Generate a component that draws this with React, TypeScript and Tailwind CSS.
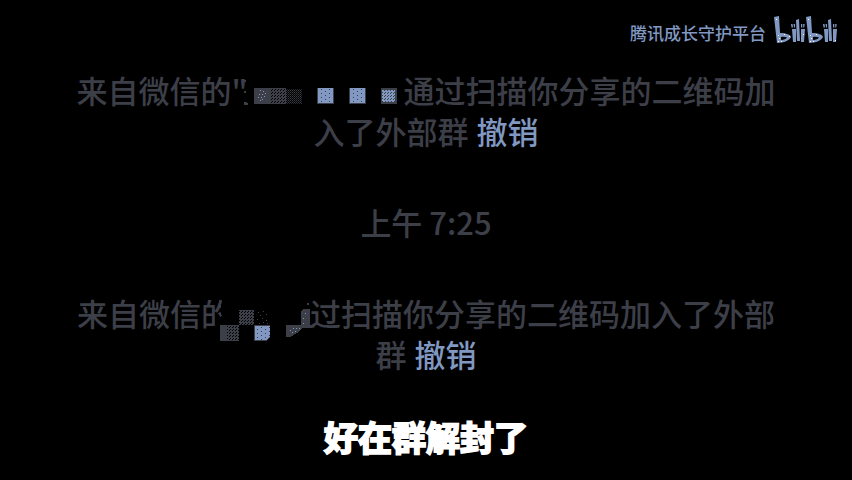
import type { ReactNode } from "react";

function DitherPatterns() {
  return (
    <defs>
      <pattern id="blueDots" width="8" height="4" patternUnits="userSpaceOnUse">
        <rect width="8" height="4" fill="#8199c2" />
        <rect x="1" y="1" width="1" height="1" fill="#3d3f48" />
        <rect x="5" y="3" width="1" height="1" fill="#3d3f48" />
      </pattern>
      <pattern id="blueDense" width="3" height="3" patternUnits="userSpaceOnUse">
        <rect width="3" height="3" fill="#8199c2" />
        <rect x="0" y="0" width="1" height="1" fill="#3d3f48" />
        <rect x="1" y="2" width="1" height="1" fill="#3d3f48" />
      </pattern>
      <pattern id="greyDense" width="3" height="3" patternUnits="userSpaceOnUse">
        <rect width="3" height="3" fill="#3d3f48" />
        <rect x="1" y="0" width="1" height="1" fill="#000" />
        <rect x="2" y="2" width="1" height="1" fill="#000" />
      </pattern>
      <pattern id="greySparse" width="2" height="2" patternUnits="userSpaceOnUse">
        <rect x="0" y="0" width="1" height="1" fill="#3d3f48" />
        <rect x="1" y="1" width="1" height="1" fill="#25262c" />
      </pattern>
    </defs>
  );
}

function FirstMosaic() {
  return (
    <svg className="h-10 w-[156px] shrink-0 overflow-visible" viewBox="248 70 156 40" shapeRendering="crispEdges" aria-hidden="true">
      <DitherPatterns />
      <path d="M244 80h2v2h-2zM244 91h2v2h-2zM244 102h3v1h1v2h-4z" fill="#3d3f48" />
      <rect x="254" y="88" width="17" height="16" fill="#3d3f48" />
      <rect x="271" y="88" width="15" height="16" fill="url(#greyDense)" />
      <rect x="286" y="89" width="16" height="15" fill="url(#greySparse)" />
      <path d="M260 90h1v1h-1zM263 91h1v1h-1zM259 94h1v1h-1zM262 94h1v1h-1zM265 93h1v1h-1zM258 97h1v1h-1zM261 97h1v1h-1zM264 96h1v1h-1zM260 100h1v1h-1zM262 99h1v1h-1z" fill="#8199c2" />
      <rect x="317" y="88" width="17" height="16" fill="#3d3f48" />
      <rect x="318" y="88" width="15" height="15" fill="url(#blueDots)" />
      <rect x="349" y="88" width="17" height="16" fill="#3d3f48" />
      <rect x="350" y="88" width="15" height="15" fill="url(#blueDots)" />
      <rect x="381" y="88" width="16" height="16" fill="#3d3f48" />
      <rect x="382" y="90" width="13" height="12" fill="url(#blueDense)" />
    </svg>
  );
}

function SecondMosaic() {
  return (
    <svg className="-ml-7 h-12 w-[106px] shrink-0 overflow-visible" viewBox="204 289 106 48" shapeRendering="crispEdges" aria-hidden="true">
      <path d="M223 298L220 310L222 316L216 318V344H309V298Z" fill="#000" />
      <rect x="220" y="325" width="19" height="16" fill="#3d3f48" />
      <rect x="227" y="326" width="12" height="14" fill="url(#greyDense)" />
      <rect x="239" y="310" width="15" height="15" fill="url(#greyDense)" />
      <path d="M258 312h1v1h-1zM263 311h1v1h-1zM260 315h1v1h-1zM266 314h1v1h-1zM257 319h1v1h-1zM262 318h1v1h-1zM266 320h1v1h-1zM259 323h1v1h-1zM263 322h1v1h-1zM267 323h1v1h-1z" fill="#3d3f48" />
      <path d="M254 325H270V338L266 341H254Z" fill="#3d3f48" />
      <path d="M255 326H270V337L266 340H255Z" fill="url(#blueDots)" />
      <path d="M286 325H301V311L304 309H310V325H312V328H303L297 333L290 337H286ZM307 303h2v2h-2z" fill="#3d3f48" />
      <path d="M305 313h1v1h-1zM303 318h1v1h-1zM303 323h1v1h-1zM290 330h1v1h-1zM293 328h1v1h-1zM296 328h1v1h-1zM292 332h1v1h-1zM295 331h1v1h-1zM299 328h1v1h-1z" fill="#8199c2" />
    </svg>
  );
}

function BilibiliLogo() {
  return (
    <svg className="h-8 w-16 shrink-0" viewBox="774 14 64 32" role="img" aria-label="bilibili">
      <g id="bili">
        <path fillRule="evenodd" d="M774 17L779 16L780 33C786 33 791 35 791 37C790 40 784 43 777 43ZM781 37V40C784 40 786 39 787 37.5C785 36.5 783 36.5 781 37Z" fill="#8199c2" />
        <path d="M792 29H796V42H793ZM796 20L799 19L800 41H797ZM801 29H805L804 42H801Z" fill="#8199c2" />
        <path d="M791 24h1.5l.5 3.500h-1.500zM793.500 24h1.500v3.500h-1zM801 24h1.300v3.500h-1.300zM803.200 24h1.500l-.5 3.500h-1z" fill="#8199c2" />
      </g>
      <use href="#bili" x="32" />
      <path d="M778 35h1v1h-1zM779 38h1v1h-1zM778 41h1v1h-1zM781 41h1v1h-1zM784 34h1v1h-1zM789 36h1v1h-1zM810 35h1v1h-1zM811 38h1v1h-1zM810 41h1v1h-1zM813 41h1v1h-1zM816 34h1v1h-1zM776 19h1v1h-1zM808 19h1v1h-1zM803 34h1v1h-1zM835 40h1v1h-1z" fill="#fff" />
    </svg>
  );
}

function Line({ children }: { children: ReactNode }) {
  return <div className="flex h-[41px] items-center justify-center whitespace-nowrap">{children}</div>;
}

function RevokeButton() {
  return (
    <button type="button" className="ml-2 text-[#8199c2]">
      撤销
    </button>
  );
}

export default function App() {
  return (
    <main className="flex min-h-screen flex-col bg-black font-['Noto_Sans_CJK_SC',sans-serif] text-[#3d3f48]">
      <header className="flex h-[69px] items-start justify-end gap-2 pt-3.5 pr-3.5 text-[17px] leading-[38px] font-medium text-[#8199c2]">
        <span>腾讯成长守护平台</span>
        <BilibiliLogo />
      </header>

      <section className="text-[31px] leading-[41px] font-medium">
        <Line>
          <span>来自微信的"</span>
          <FirstMosaic />
          <span>通过扫描你分享的二维码加</span>
        </Line>
        <Line>
          <span>入了外部群</span>
          <RevokeButton />
        </Line>
      </section>

      <time className="py-[50px] text-center text-[31px] leading-[41px] font-medium">上午 7:25</time>

      <section className="text-[31px] leading-[41px] font-medium">
        <Line>
          <span>来自微信的</span>
          <SecondMosaic />
          <span>过扫描你分享的二维码加入了外部</span>
        </Line>
        <Line>
          <span>群</span>
          <RevokeButton />
        </Line>
      </section>

      <p className="mt-[42px] text-center text-[34px] leading-[41px] font-bold text-white [-webkit-text-stroke:2px_white]">
        好在群解封了
      </p>
    </main>
  );
}
